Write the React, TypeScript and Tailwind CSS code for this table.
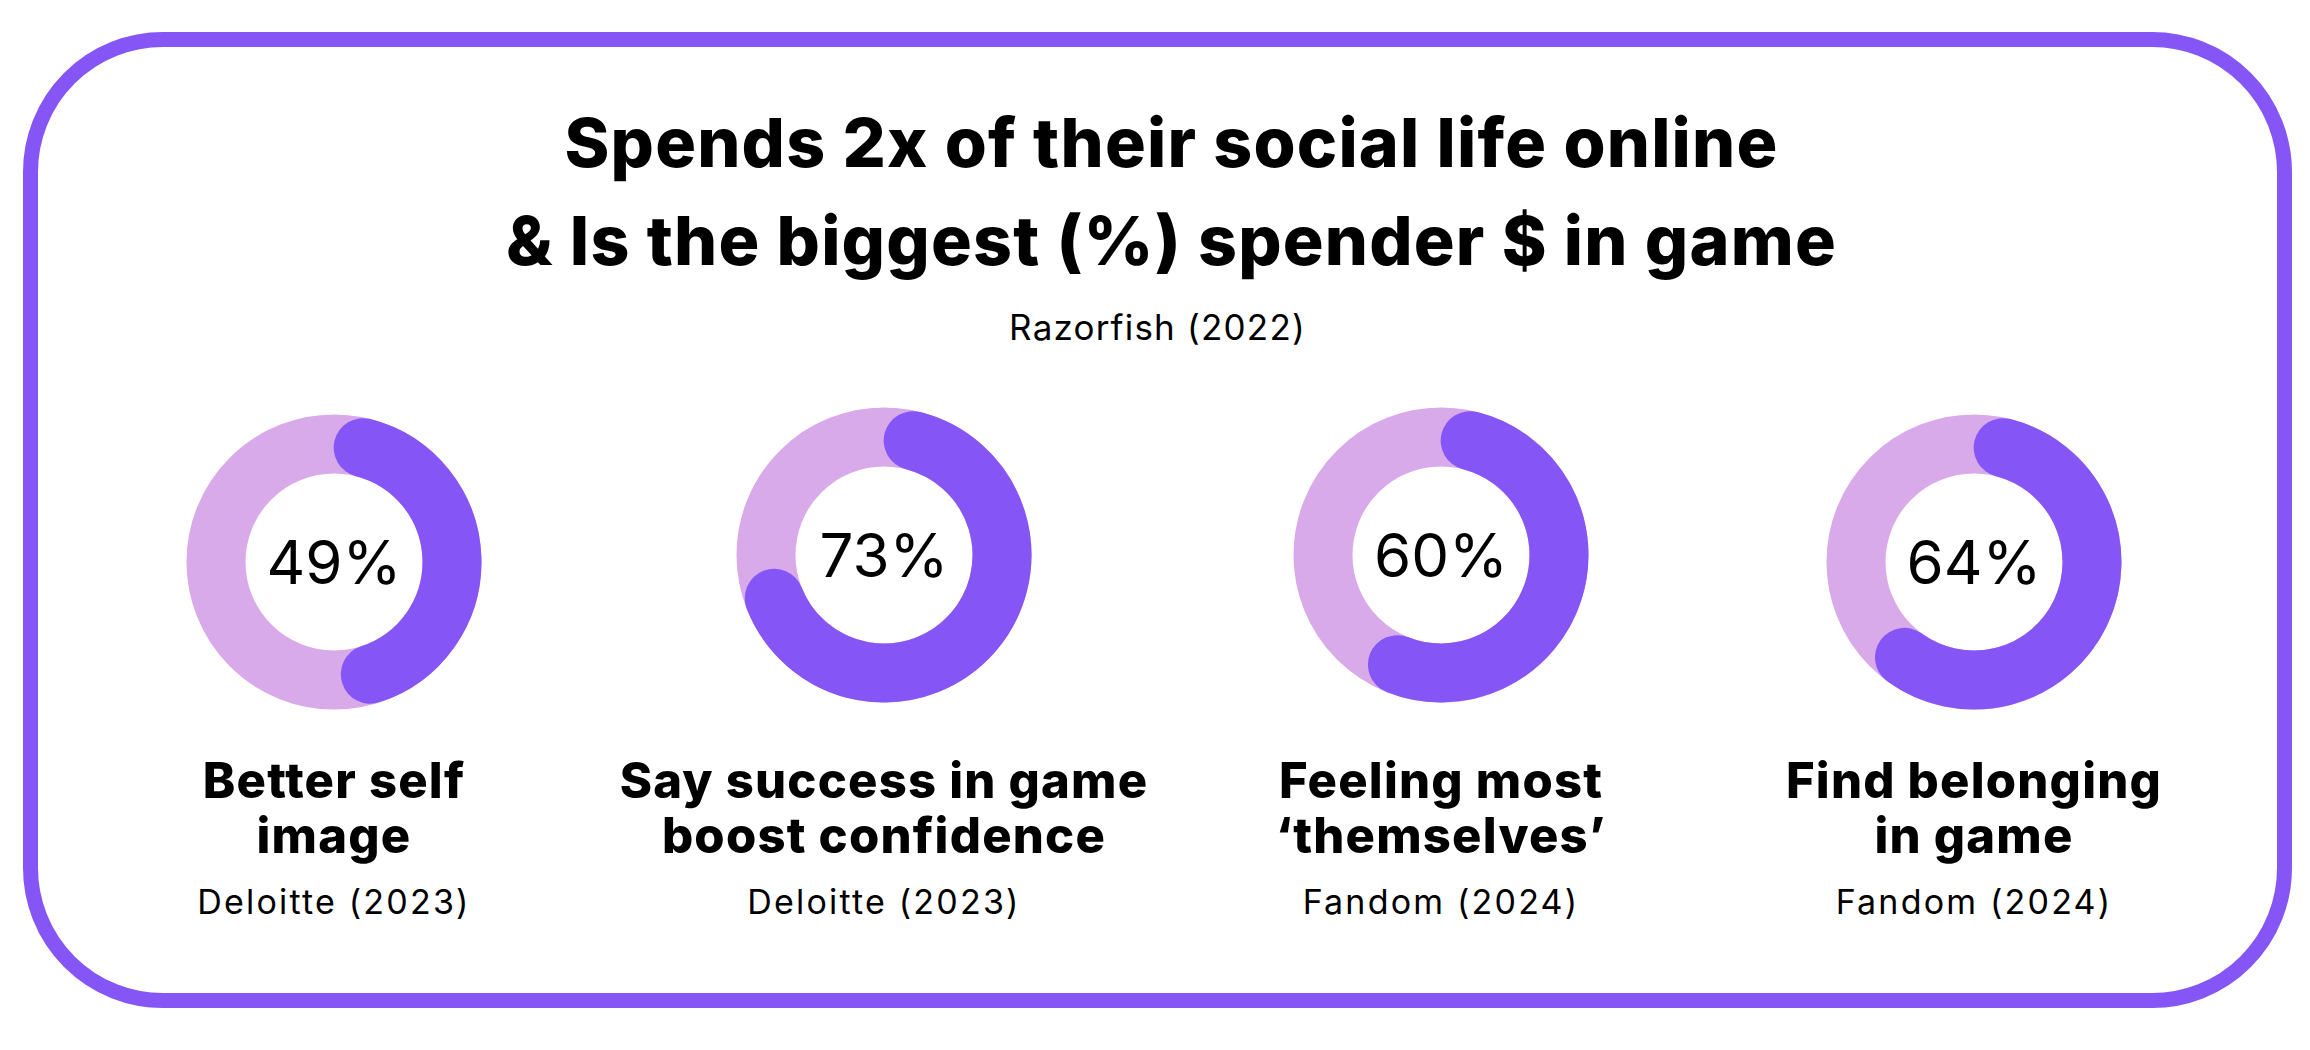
import React from "react";

type Item = {
  p: number;
  label: [string, string];
  src: string;
  w: string;
  down: boolean;
};

const items: Item[] = [
  { p: 49, label: ["Better self", "image"], src: "Deloitte (2023)", w: "w-[560px]", down: true },
  { p: 73, label: ["Say success in game", "boost confidence"], src: "Deloitte (2023)", w: "w-[540px]", down: false },
  { p: 60, label: ["Feeling most", "\u2018themselves\u2019"], src: "Fandom (2024)", w: "w-[574px]", down: false },
  { p: 64, label: ["Find belonging", "in game"], src: "Fandom (2024)", w: "w-[492px]", down: true },
];

function Donut({ p }: { p: number }) {
  const c = 150;
  const r = 118;
  const sw = 59;
  const cap = ((sw / 2) / r) * (180 / Math.PI);
  const s = cap;
  const e = p * 3.6 - cap;
  const pt = (deg: number) => {
    const a = (deg * Math.PI) / 180;
    return [c + r * Math.sin(a), c - r * Math.cos(a)];
  };
  const [x1, y1] = pt(s);
  const [x2, y2] = pt(e);
  const large = e - s > 180 ? 1 : 0;
  return (
    <svg width="300" height="300" viewBox="0 0 300 300" className="block [grid-area:1/1]">
      <circle cx={c} cy={c} r={r} fill="none" stroke="#D9AAEA" strokeWidth={sw} />
      <path
        d={`M ${x1} ${y1} A ${r} ${r} 0 ${large} 1 ${x2} ${y2}`}
        fill="none"
        stroke="#8556F5"
        strokeWidth={sw}
        strokeLinecap="round"
      />
    </svg>
  );
}

export default function App() {
  return (
    <div className="w-[2310px] h-[1050px] bg-white font-[Inter,sans-serif] text-black pt-[32px] pl-[23px]">
      <div className="w-[2269px] h-[976px] border-[15px] border-[#8556F5] rounded-[140px] flex flex-col">
        <div className="pt-[46px] pl-[28px] text-center font-extrabold text-[68px] leading-[98px] tracking-[1.2px] whitespace-nowrap">
          <div>Spends 2x of their social life online</div>
          <div>&amp; Is the biggest (%) spender $ in game</div>
        </div>
        <div className="mt-[17px] text-center text-[35px] leading-[42px] tracking-[1.2px]">Razorfish (2022)</div>
        <div className="mt-[57px] pl-[16px] flex">
          {items.map((it, i) => (
            <div key={i} className={`${it.w} flex flex-col items-center`}>
              <div className="h-[307px]">
                <div className={`grid place-items-center ${it.down ? "mt-[7px]" : "mt-0"}`}>
                  <Donut p={it.p} />
                  <div className="[grid-area:1/1] text-[60px] leading-[72px] tracking-[0px]">{it.p}%</div>
                </div>
              </div>
              <div className="mt-[41px] text-center font-extrabold text-[49px] leading-[55px] tracking-[1.2px] whitespace-nowrap">
                <div>{it.label[0]}</div>
                <div>{it.label[1]}</div>
              </div>
              <div className="mt-[18px] text-center text-[34px] leading-[41px] tracking-[2.2px] whitespace-nowrap">
                {it.src}
              </div>
            </div>
          ))}
        </div>
      </div>
    </div>
  );
}
